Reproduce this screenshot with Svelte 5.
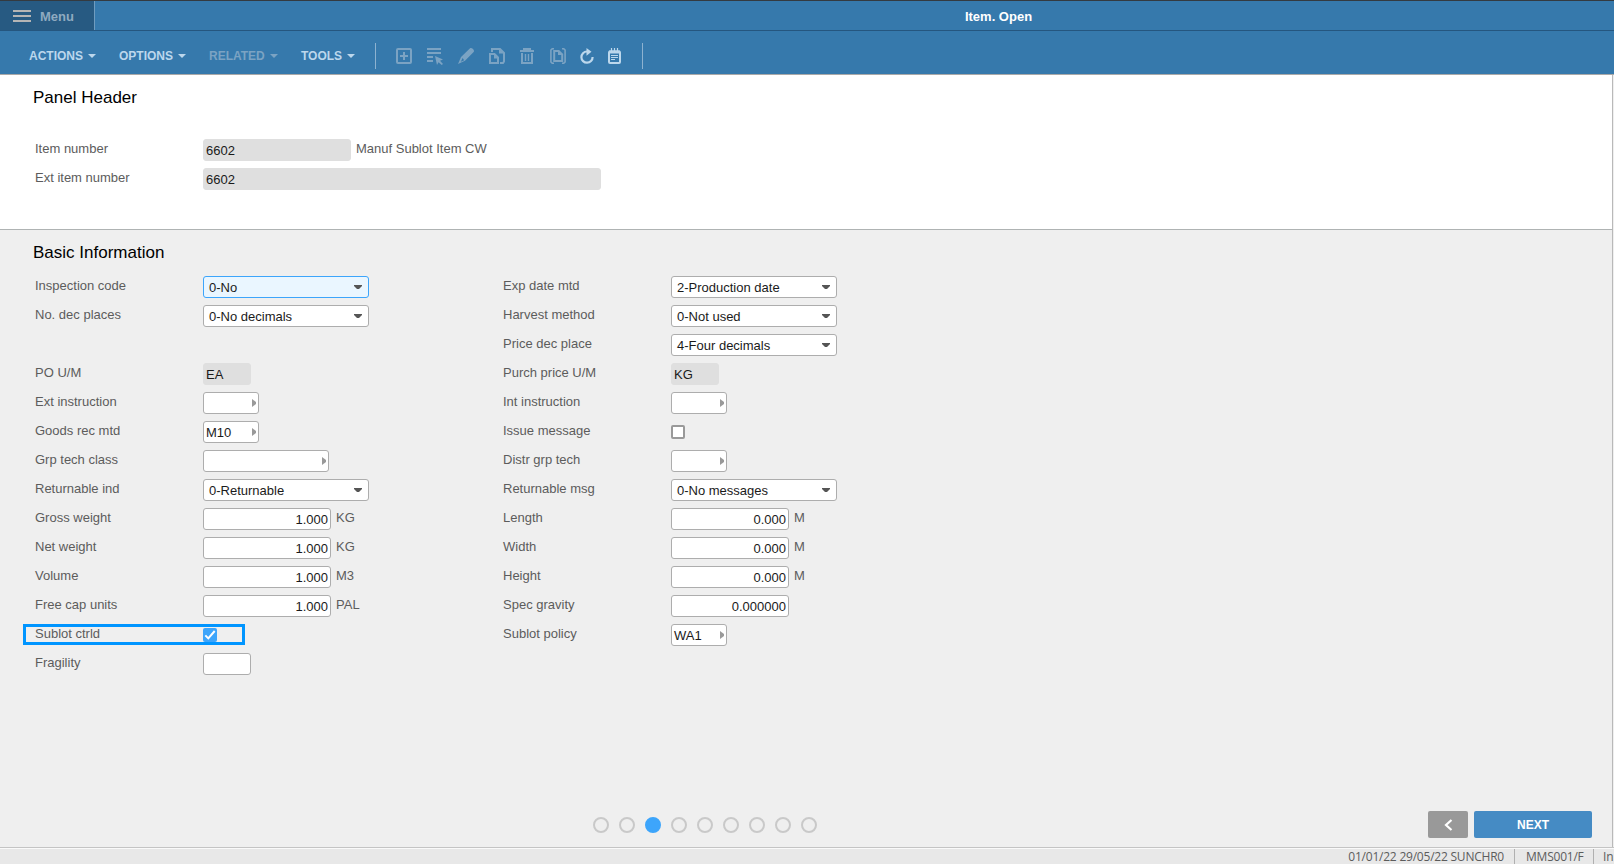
<script lang="ts">
  const menus = [
    { name: 'ACTIONS', width: 90 },
    { name: 'OPTIONS', width: 90 },
    { name: 'RELATED', width: 92, disabled: true },
    { name: 'TOOLS', width: 74 },
  ];

  const header = [
    { label: 'Item number', type: 'readonly', value: '6602', width: 148, unit: 'Manuf Sublot Item CW' },
    { label: 'Ext item number', type: 'readonly', value: '6602', width: 398 },
  ];

  const left = [
    { label: 'Inspection code', type: 'select', value: '0-No', width: 166, focused: true },
    { label: 'No. dec places', type: 'select', value: '0-No decimals', width: 166 },
    { label: '', type: 'blank' },
    { label: 'PO U/M', type: 'readonly', value: 'EA', width: 48 },
    { label: 'Ext instruction', type: 'browse', value: '', width: 56 },
    { label: 'Goods rec mtd', type: 'browse', value: 'M10', width: 56 },
    { label: 'Grp tech class', type: 'browse', value: '', width: 126 },
    { label: 'Returnable ind', type: 'select', value: '0-Returnable', width: 166 },
    { label: 'Gross weight', type: 'number', value: '1.000', width: 128, unit: 'KG' },
    { label: 'Net weight', type: 'number', value: '1.000', width: 128, unit: 'KG' },
    { label: 'Volume', type: 'number', value: '1.000', width: 128, unit: 'M3' },
    { label: 'Free cap units', type: 'number', value: '1.000', width: 128, unit: 'PAL' },
    { label: 'Sublot ctrld', type: 'check', checked: true, marked: true },
    { label: 'Fragility', type: 'text', value: '', width: 48 },
  ];

  const right = [
    { label: 'Exp date mtd', type: 'select', value: '2-Production date', width: 166 },
    { label: 'Harvest method', type: 'select', value: '0-Not used', width: 166 },
    { label: 'Price dec place', type: 'select', value: '4-Four decimals', width: 166 },
    { label: 'Purch price U/M', type: 'readonly', value: 'KG', width: 48 },
    { label: 'Int instruction', type: 'browse', value: '', width: 56 },
    { label: 'Issue message', type: 'check', checked: false },
    { label: 'Distr grp tech', type: 'browse', value: '', width: 56 },
    { label: 'Returnable msg', type: 'select', value: '0-No messages', width: 166 },
    { label: 'Length', type: 'number', value: '0.000', width: 118, unit: 'M' },
    { label: 'Width', type: 'number', value: '0.000', width: 118, unit: 'M' },
    { label: 'Height', type: 'number', value: '0.000', width: 118, unit: 'M' },
    { label: 'Spec gravity', type: 'number', value: '0.000000', width: 118 },
    { label: 'Sublot policy', type: 'browse', value: 'WA1', width: 56 },
  ];

  let page = 2;
</script>

{#snippet row(f)}
  <div class="row" class:marked={f.marked}>
    <span class="label">{f.label}</span>
    {#if f.type === 'check'}
      <span class="check" class:checked={f.checked}>
        {#if f.checked}
          <svg width="14" height="14" viewBox="0 0 14 14"><path d="M2.3 7.4l3 3L11.7 3" fill="none" stroke="#fff" stroke-width="2" /></svg>
        {/if}
      </span>
    {:else if f.type !== 'blank'}
      <div class="field {f.type}" class:focused={f.focused} style="width: {f.width}px">
        <span>{f.value}</span>
        {#if f.type === 'select'}
          <svg width="8" height="4" viewBox="0 0 8 4"><path d="M0 0h8v1L5 4H3L0 1z" fill="#555" /></svg>
        {:else if f.type === 'browse'}
          <svg width="4" height="8" viewBox="0 0 4 8"><path d="M0 0l4 3v2L0 8z" fill="#999" /></svg>
        {/if}
      </div>
    {/if}
    {#if f.unit}<span class="unit">{f.unit}</span>{/if}
  </div>
{/snippet}

<div class="app">
  <header class="titlebar">
    <div class="menu">
      <svg width="18" height="12" viewBox="0 0 18 12"><path d="M0 1h18M0 6h18M0 11h18" stroke="#b5b5b5" stroke-width="2" /></svg>
      <span>Menu</span>
    </div>
    <div class="title">Item. Open</div>
  </header>

  <nav class="toolbar">
    {#each menus as m}
      <div class="drop" class:disabled={m.disabled} style="width: {m.width}px">
        {m.name}
        <svg width="8" height="4" viewBox="0 0 8 4"><path d="M0 0h8L4 4z" fill="currentColor" /></svg>
      </div>
    {/each}
    <div class="icons">
      <!-- create -->
      <svg class="dim" width="16" height="16" viewBox="0 0 16 16"><rect x="1" y="1" width="14" height="14" rx="1" fill="none" stroke="currentColor" stroke-width="2" /><path d="M8 4v8M4 8h8" stroke="currentColor" stroke-width="2" /></svg>
      <!-- select -->
      <svg class="dim" width="16" height="18" viewBox="0 0 16 18"><path d="M0 2h14M0 6h14M0 10h6M0 14h6" stroke="currentColor" stroke-width="2" /><path d="M8 9l8 3.600-3 1.100 3 3.300-1.300 1-3.200-2.800L10 18z" fill="currentColor" /></svg>
      <!-- change -->
      <svg class="dim" width="16" height="16" viewBox="0 0 16 16"><path d="M11.8 0.5c.8-.7 1.900-.6 2.600.1l1 1c.8.8.8 1.800 0 2.600L7 12.800 0 16l3-7.100zM4.600 10L2.800 13.800l3.300-1.600z" fill="currentColor" fill-rule="evenodd" /></svg>
      <!-- copy -->
      <svg class="dim" width="16" height="16" viewBox="0 0 16 16"><path d="M3 4V1h8l4 4v8.500l-1 1.500h-3" fill="none" stroke="currentColor" stroke-width="2" /><path d="M10 1v4.500h5z" fill="currentColor" /><path d="M1 6h4.500L9 9.500V15H1z" fill="none" stroke="currentColor" stroke-width="2" /><path d="M5 6v4.500h4z" fill="currentColor" /></svg>
      <!-- delete -->
      <svg class="dim" width="14" height="16" viewBox="0 0 14 16"><path d="M0 3h14M4 2.500V1h6v1.500" fill="none" stroke="currentColor" stroke-width="2" /><path d="M2 5v10h10V5" fill="none" stroke="currentColor" stroke-width="2" /><path d="M5.500 6v7M8.500 6v7" stroke="currentColor" stroke-width="1.400" /></svg>
      <!-- display -->
      <svg class="dim display" width="16" height="16" viewBox="0 0 16 16"><path d="M4 .8H2.200L.9 2v12l1.300 1.200H4M12 .8h1.800L15.100 2v12l-1.300 1.200H12" fill="none" stroke="currentColor" stroke-width="1.600" /><path d="M4.200 3h4.500l3.500 3.500V13h-8z" fill="none" stroke="currentColor" stroke-width="2" /><path d="M8 3v4h4z" fill="currentColor" /></svg>
      <!-- refresh -->
      <svg class="refresh" width="14" height="16" viewBox="0 0 14 16"><path d="M7 3.500A5.600 5.600 0 1 0 12.600 9" fill="none" stroke="currentColor" stroke-width="2.200" /><path d="M6.500 0l5 3.800-5 4z" fill="currentColor" /></svg>
      <!-- notes -->
      <svg class="notes" width="13" height="16" viewBox="0 0 13 16"><path d="M3.500 0v3M6.500 0v3M9.500 0v3" stroke="currentColor" stroke-width="1.200" /><rect x="1" y="3.500" width="11" height="11.500" rx="1" fill="none" stroke="currentColor" stroke-width="2" /><path d="M1 4h11" stroke="currentColor" stroke-width="3" /><path d="M3 7.500h7M3 9.500h7M3 11.500h4" stroke="currentColor" stroke-width="1" /></svg>
    </div>
  </nav>

  <section class="panel">
    <h2>Panel Header</h2>
    <div class="col">
      {#each header as f}{@render row(f)}{/each}
    </div>
  </section>

  <section class="basic">
    <h2>Basic Information</h2>
    <div class="cols">
      <div class="col">
        {#each left as f}{@render row(f)}{/each}
      </div>
      <div class="col">
        {#each right as f}{@render row(f)}{/each}
      </div>
    </div>
    <div class="pager">
      <div class="dots">
        {#each Array(9) as _, i}
          <span class="dot" class:active={i === page}></span>
        {/each}
      </div>
      <div class="buttons">
        <div class="prev">
          <svg width="9" height="12" viewBox="0 0 9 12"><path d="M7.500 1L2 6l5.500 5" fill="none" stroke="#fff" stroke-width="2.200" /></svg>
        </div>
        <div class="next">NEXT</div>
      </div>
    </div>
  </section>

  <footer>
    <span class="date">01/01/22 29/05/22 SUNCHR0</span>
    <span class="prog">MMS001/F</span>
    <span class="mode">In</span>
  </footer>
</div>

<style>
  :global(body) {
    overflow: hidden;
  }

  .app {
    display: flex;
    flex-direction: column;
    width: 1614px;
    height: 864px;
    overflow: hidden;
    background: #efefef;
    font-family: 'Liberation Sans', Arial, sans-serif;
    font-size: 13px;
    color: #5c5c5c;
  }
  .app, .app * {
    box-sizing: border-box;
  }
  svg {
    display: block;
    flex: none;
  }

  .titlebar {
    display: flex;
    flex: none;
    height: 31px;
    background: #3679ac;
    border-top: 1px solid #343a40;
    border-bottom: 1px solid #25567f;
    font-weight: bold;
    line-height: 29px;
  }
  .menu {
    display: flex;
    align-items: center;
    gap: 9px;
    width: 95px;
    padding-left: 13px;
    background: #275a82;
    border-right: 1px solid #6f9cbf;
    color: #8faac0;
  }
  .menu svg {
    margin-top: 1px;
  }
  .menu span {
    padding-top: 2px;
  }
  .title {
    flex: 1;
    padding: 1px 0 0 288px;
    text-align: center;
    color: #fff;
  }

  .toolbar {
    display: flex;
    flex: none;
    align-items: center;
    height: 44px;
    padding-left: 29px;
    background: #3679ac;
    border-bottom: 1px solid #a9a9a9;
    color: #bcd7ec;
  }
  .drop {
    display: flex;
    align-items: center;
    gap: 5px;
    padding-top: 7px;
    font-size: 12px;
    font-weight: bold;
  }
  .disabled,
  .dim {
    color: #7ba3c3;
  }
  .icons {
    display: flex;
    align-items: center;
    gap: 15px;
    height: 26px;
    margin-top: 7px;
    padding: 0 21px 0 20px;
    border: solid #8db2d0;
    border-width: 0 1px;
  }
  .display {
    margin: 0 -1px 0 1px;
  }
  .notes {
    margin-left: -1px;
  }

  h2 {
    margin: 0;
    font-size: 17px;
    line-height: 21px;
    font-weight: normal;
    color: #000;
  }
  .panel,
  .basic {
    width: 1613px;
    padding-left: 33px;
    border-right: 1px solid #b9b9b9;
  }
  .panel {
    flex: none;
    height: 155px;
    padding-top: 12px;
    background: #fff;
    border-bottom: 1px solid #afb3b3;
  }
  .panel .col {
    margin-top: 31px;
  }
  .basic {
    display: flex;
    flex-direction: column;
    flex: 1;
    padding-top: 12px;
  }

  .cols {
    display: flex;
    margin-top: 13px;
  }
  .col {
    display: flex;
    flex-direction: column;
    gap: 7px;
    width: 468px;
    padding-left: 2px;
  }
  .row {
    display: flex;
    width: 660px;
    height: 22px;
    line-height: 19px;
  }
  .label {
    width: 168px;
  }
  .unit {
    margin-left: 5px;
  }
  .field {
    display: flex;
    align-items: center;
    justify-content: space-between;
    height: 22px;
    padding: 0 2px;
    background: #fff;
    border: 1px solid #adadad;
    border-radius: 3px;
    color: #1a1a1a;
  }
  .field span {
    padding-top: 1px;
  }
  .readonly {
    background: #dfdfdf;
    border-color: #dfdfdf;
  }
  .number {
    justify-content: flex-end;
  }
  .select {
    padding: 0 6px 0 5px;
  }
  .focused {
    background: #eaf6ff;
    border-color: #3da5fb;
  }
  .check {
    width: 14px;
    height: 14px;
    margin-top: 4px;
    background: #fff;
    border: 2px solid #999;
    border-radius: 2px;
  }
  .checked {
    background: #3da5fb;
    border: 0;
  }
  /* highlighted row keeps its label and box on the grid */
  .marked {
    width: 222px;
    height: 21px;
    margin: 0 0 1px -12px;
    padding-left: 9px;
    border: 3px solid #0095ff;
    line-height: 13px;
  }
  .marked .check {
    margin-top: 1px;
  }

  .pager {
    display: flex;
    align-items: center;
    justify-content: space-between;
    margin-top: auto;
    margin-bottom: 9px;
    padding: 0 20px 0 560px;
  }
  .dots {
    display: flex;
    gap: 10px;
  }
  .dot {
    width: 16px;
    height: 16px;
    border: 2px solid #c9c9c9;
    border-radius: 50%;
  }
  .active {
    background: #3da5fb;
    border-color: #3da5fb;
  }
  .buttons {
    display: flex;
    gap: 6px;
    color: #fff;
    font-weight: bold;
  }
  .prev,
  .next {
    display: flex;
    align-items: center;
    justify-content: center;
    height: 27px;
    border-radius: 2px;
  }
  .prev {
    width: 40px;
    background: #999;
  }
  .next {
    width: 118px;
    padding-top: 1px;
    background: #458bc4;
    font-size: 12px;
  }

  footer {
    display: flex;
    flex: none;
    justify-content: flex-end;
    height: 17px;
    border-top: 1px solid #c4c4c4;
    background: linear-gradient(#fafafa 1px, #e8e8e8 1px);
    font-family: 'Open Sans', 'Noto Sans', sans-serif;
    font-size: 12px;
    line-height: 15px;
    letter-spacing: -0.22px;
    white-space: nowrap;
  }
  footer span {
    height: 15px;
    margin-top: 1px;
  }
  .date {
    padding-right: 10px;
  }
  .prog,
  .mode {
    padding-left: 11px;
    border-left: 1px solid #b0b0b0;
  }
  .prog {
    width: 79px;
  }
  .mode {
    width: 21px;
    padding-left: 9px;
  }
</style>
